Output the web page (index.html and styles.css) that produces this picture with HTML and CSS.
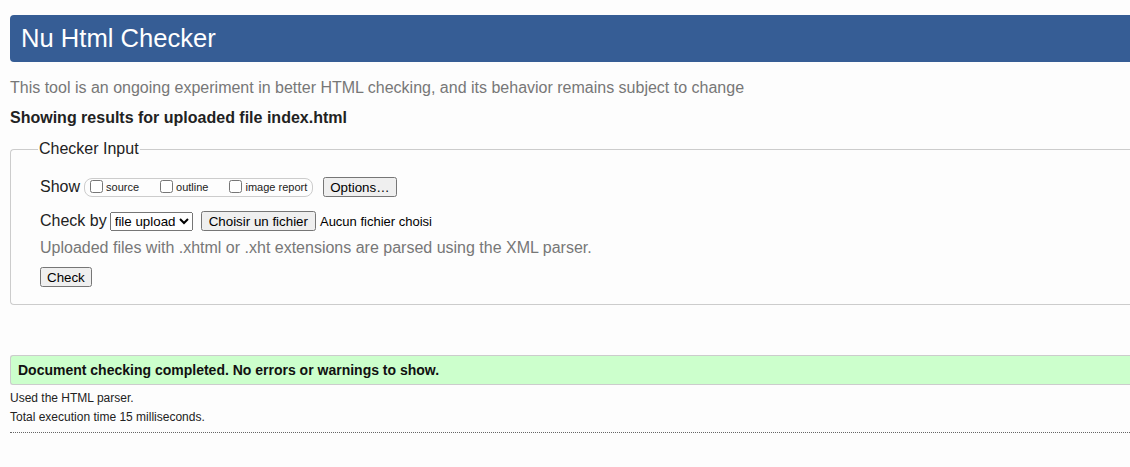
FILE: index.html
```html
<!DOCTYPE html>
<html lang="en">
<head>
<meta charset="utf-8">
<title>Nu Html Checker</title>
<link rel="stylesheet" href="styles.css">
</head>
<body>
<div class="page">
  <h1 class="header">Nu Html Checker</h1>
  <p class="intro">This tool is an ongoing experiment in better HTML checking, and its behavior remains subject to change</p>
  <p class="showing">Showing results for uploaded file index.html</p>
  <fieldset class="input">
    <legend class="input-legend">Checker Input</legend>
    <div class="row row-show">
      <span class="row-label">Show</span>
      <span class="extra">
        <label class="opt"><input type="checkbox" class="cb">source</label>
        <label class="opt"><input type="checkbox" class="cb">outline</label>
        <label class="opt opt-last"><input type="checkbox" class="cb">image report</label>
      </span>
      <button type="button" class="btn btn-options">Options…</button>
    </div>
    <div class="row row-check">
      <span class="row-label">Check by</span>
      <select class="sel"><option>file upload</option></select>
      <button type="button" class="btn btn-file">Choisir un fichier</button>
      <span class="nofile">Aucun fichier choisi</span>
    </div>
    <p class="note">Uploaded files with .xhtml or .xht extensions are parsed using the XML parser.</p>
    <button type="button" class="btn btn-check">Check</button>
  </fieldset>
  <div class="success"><p class="success-text">Document checking completed. No errors or warnings to show.</p></div>
  <div class="stats-block">
    <p class="stats">Used the HTML parser.</p>
    <p class="stats">Total execution time 15 milliseconds.</p>
  </div>
  <hr class="sep">
</div>
</body>
</html>
```
FILE: styles.css
```css
html, body {
  margin: 0;
  padding: 0;
  overflow: hidden;
  background: #fdfdfd;
}
body {
  font-family: "Liberation Sans", Arial, sans-serif;
  color: #222;
}
.page {
  width: 1150px;
  padding: 15px 0 0 10px;
}
.header {
  margin: 0;
  height: 47px;
  line-height: 47px;
  padding-left: 11px;
  background: #365d95;
  color: #fff;
  font-size: 25.6px;
  font-weight: normal;
  border-radius: 4px 0 0 4px;
}
.intro {
  margin: 16px 0 0;
  font-size: 16px;
  line-height: 20px;
  color: #777;
}
.showing {
  margin: 10px 0 0;
  font-size: 16px;
  line-height: 20px;
  font-weight: bold;
  color: #222;
}
.input {
  margin: 11px 0 0;
  padding: 16px 29px 17px 29px;
  border: 1px solid #ccc;
  border-right: none;
  border-radius: 4px 0 0 4px;
  min-width: 0;
}
.input-legend {
  padding: 0 1px;
  margin-left: -2px;
  font-size: 16px;
  line-height: 20px;
  color: #222;
}
.row {
  display: flex;
  align-items: center;
}
.row-label {
  font-size: 16px;
  line-height: 20px;
  margin-right: 3px;
}
.row-show {
  height: 20px;
  margin-top: 2px;
}
.extra {
  display: inline-flex;
  align-items: center;
  height: 17px;
  border: 1px solid #ccc;
  border-radius: 8px;
  padding: 0 5px 0 2px;
  margin-left: 1px;
}
.opt {
  display: inline-flex;
  align-items: center;
  font-size: 11px;
  margin-right: 18px;
}
.opt-last {
  margin-right: 0;
}
.cb {
  margin: 0 3px 2px 3px;
  width: 13px;
  height: 13px;
}
.btn {
  font-family: "Liberation Sans", Arial, sans-serif;
  font-size: 13.333px;
  color: #000;
  padding: 1px 6px;
  height: 20px;
  line-height: 16px;
}
.btn-options {
  margin-left: 10px;
  padding: 1px 5px;
}
.row-check {
  margin-top: 14px;
  height: 20px;
}
.sel {
  font-family: "Liberation Sans", Arial, sans-serif;
  font-size: 13.333px;
  height: 19px;
  padding: 0;
  margin-left: 0;
  color: #000;
}
.btn-file {
  margin-left: 8px;
}
.nofile {
  font-size: 13px;
  margin-left: 4px;
  color: #000;
}
.note {
  margin: 7px 0 0;
  font-size: 16px;
  line-height: 20px;
  color: #777;
}
.btn-check {
  margin-top: 9px;
  display: block;
  padding: 1px 5px;
}
.success {
  margin-top: 50px;
  height: 28px;
  background: #ccffcc;
  border: 1px solid #ccc;
  border-right: none;
  border-radius: 3px 0 0 3px;
  display: flex;
  align-items: center;
  padding-left: 7px;
}
.success-text {
  margin: 0;
  font-size: 14px;
  font-weight: bold;
  color: #111;
}
.stats-block {
  margin-top: 4px;
}
.stats {
  margin: 0;
  font-size: 12px;
  line-height: 19px;
  color: #222;
}
.sep {
  margin: 5px 0 0;
  border: none;
  border-top: 1px dotted #666;
  height: 0;
}
```
